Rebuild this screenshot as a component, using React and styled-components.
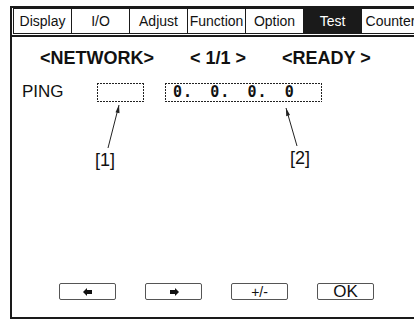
import React from "react";
import styled, { createGlobalStyle } from "styled-components";

const GlobalStyle = createGlobalStyle`
  html, body {
    margin: 0;
    padding: 0;
    background: #fff;
    overflow: hidden;
  }
  body {
    font-family: "Liberation Sans", Arial, sans-serif;
    color: #111;
  }
`;

const Frame = styled.div`
  box-sizing: border-box;
  margin: 6px 0 0 10px;
  width: 420px;
  height: 313px;
  border: 2px solid #1a1a1a;
  border-right: none;
  display: flex;
  flex-direction: column;
  padding-bottom: 17px;
`;

const TabBar = styled.div`
  display: flex;
  padding: 0 0 1px 1px;
  border-bottom: 2px solid #1a1a1a;
`;

const Tab = styled.div`
  box-sizing: border-box;
  width: 59px;
  height: 26px;
  margin-right: -1px;
  border: 1px solid #1a1a1a;
  display: flex;
  align-items: center;
  justify-content: center;
  font-size: 14px;
  white-space: nowrap;
  overflow: hidden;
  background: ${(p) => (p.$active ? "#1a1a1a" : "#fff")};
  color: ${(p) => (p.$active ? "#fff" : "#111")};
`;

const Header = styled.div`
  display: flex;
  gap: 36px;
  margin-top: 11px;
  padding-left: 28px;
  font-size: 18px;
  line-height: 20px;
  font-weight: bold;
  white-space: pre;
`;

const FieldRow = styled.div`
  display: flex;
  align-items: center;
  margin-top: 14px;
  padding-left: 10px;
`;

const FieldLabel = styled.div`
  width: 75px;
  font-size: 17px;
  line-height: 20px;
`;

const dotted = `
  background:
    repeating-linear-gradient(90deg, #222 0 2px, transparent 2px 3px) top left / 100% 1px no-repeat,
    repeating-linear-gradient(90deg, #222 0 2px, transparent 2px 3px) bottom left / 100% 1px no-repeat,
    repeating-linear-gradient(180deg, #222 0 2px, transparent 2px 3px) top left / 1px 100% no-repeat,
    repeating-linear-gradient(180deg, #222 0 2px, transparent 2px 3px) top right / 1px 100% no-repeat;
`;

const ValueBox = styled.div`
  box-sizing: border-box;
  width: ${(p) => p.$w}px;
  height: 19px;
  margin-right: 21px;
  display: flex;
  align-items: center;
  padding-left: 8px;
  ${dotted}
`;

const Octet = styled.span`
  width: 44px;
  font-family: "DejaVu Sans Mono", "Liberation Mono", monospace;
  font-weight: bold;
  font-size: 15px;
  letter-spacing: 1px;
`;

const Callouts = styled.div`
  display: flex;
  margin-top: 2px;
  padding-left: 77px;
  gap: 163px;
`;

const Callout = styled.div`
  display: flex;
  flex-direction: column;
  align-items: center;
  width: 32px;
`;

const CalloutText = styled.div`
  margin-top: ${(p) => p.$shift}px;
  font-size: 18px;
  line-height: 20px;
`;

const ButtonRow = styled.div`
  display: flex;
  gap: 29px;
  margin-top: auto;
  padding-left: 47px;
`;

const Button = styled.div`
  box-sizing: border-box;
  width: 57px;
  height: 17px;
  border: 1px solid #555;
  border-radius: 2px;
  display: flex;
  align-items: center;
  justify-content: center;
  font-size: ${(p) => p.$size || 14}px;
  line-height: 1;
`;

const Leader = ({ tip, base1, base2, end }) => (
  <svg width="32" height="46" viewBox="0 0 32 46">
    <line x1={tip[0]} y1={tip[1]} x2={end[0]} y2={end[1]} stroke="#222" strokeWidth="1" />
    <polygon points={`${tip} ${base1} ${base2}`} fill="#222" />
  </svg>
);

const ArrowIcon = ({ right }) => (
  <svg width="10" height="8" viewBox="0 0 10 8">
    <polygon
      points="0,4 4,0 4,2 9,2 9,6 4,6 4,8"
      fill="#111"
      transform={right ? "translate(10,0) scale(-1,1)" : undefined}
    />
  </svg>
);

const tabs = ["Display", "I/O", "Adjust", "Function", "Option", "Test", "Counter"];

export default function App() {
  return (
    <>
      <GlobalStyle />
      <Frame>
        <TabBar>
          {tabs.map((t) => (
            <Tab key={t} $active={t === "Test"}>
              {t}
            </Tab>
          ))}
        </TabBar>

        <Header>
          <span>{"<NETWORK>"}</span>
          <span>{"< 1/1 >"}</span>
          <span>{"<READY >"}</span>
        </Header>

        <FieldRow>
          <FieldLabel>PING</FieldLabel>
          <ValueBox $w={47} />
          <ValueBox $w={157}>
            <Octet>0.</Octet>
            <Octet>0.</Octet>
            <Octet>0.</Octet>
            <Octet>0</Octet>
          </ValueBox>
        </FieldRow>

        <Callouts>
          <Callout>
            <Leader tip={[30, 1]} base1={[30.5, 9.2]} base2={[26.5, 8.2]} end={[19, 44]} />
            <CalloutText $shift={0}>[1]</CalloutText>
          </Callout>
          <Callout>
            <Leader tip={[2, 4]} base1={[6, 11.1]} base2={[2.2, 12.3]} end={[13, 42]} />
            <CalloutText $shift={-2}>[2]</CalloutText>
          </Callout>
        </Callouts>

        <ButtonRow>
          <Button>
            <ArrowIcon />
          </Button>
          <Button>
            <ArrowIcon right />
          </Button>
          <Button>+/-</Button>
          <Button $size={17}>OK</Button>
        </ButtonRow>
      </Frame>
    </>
  );
}
